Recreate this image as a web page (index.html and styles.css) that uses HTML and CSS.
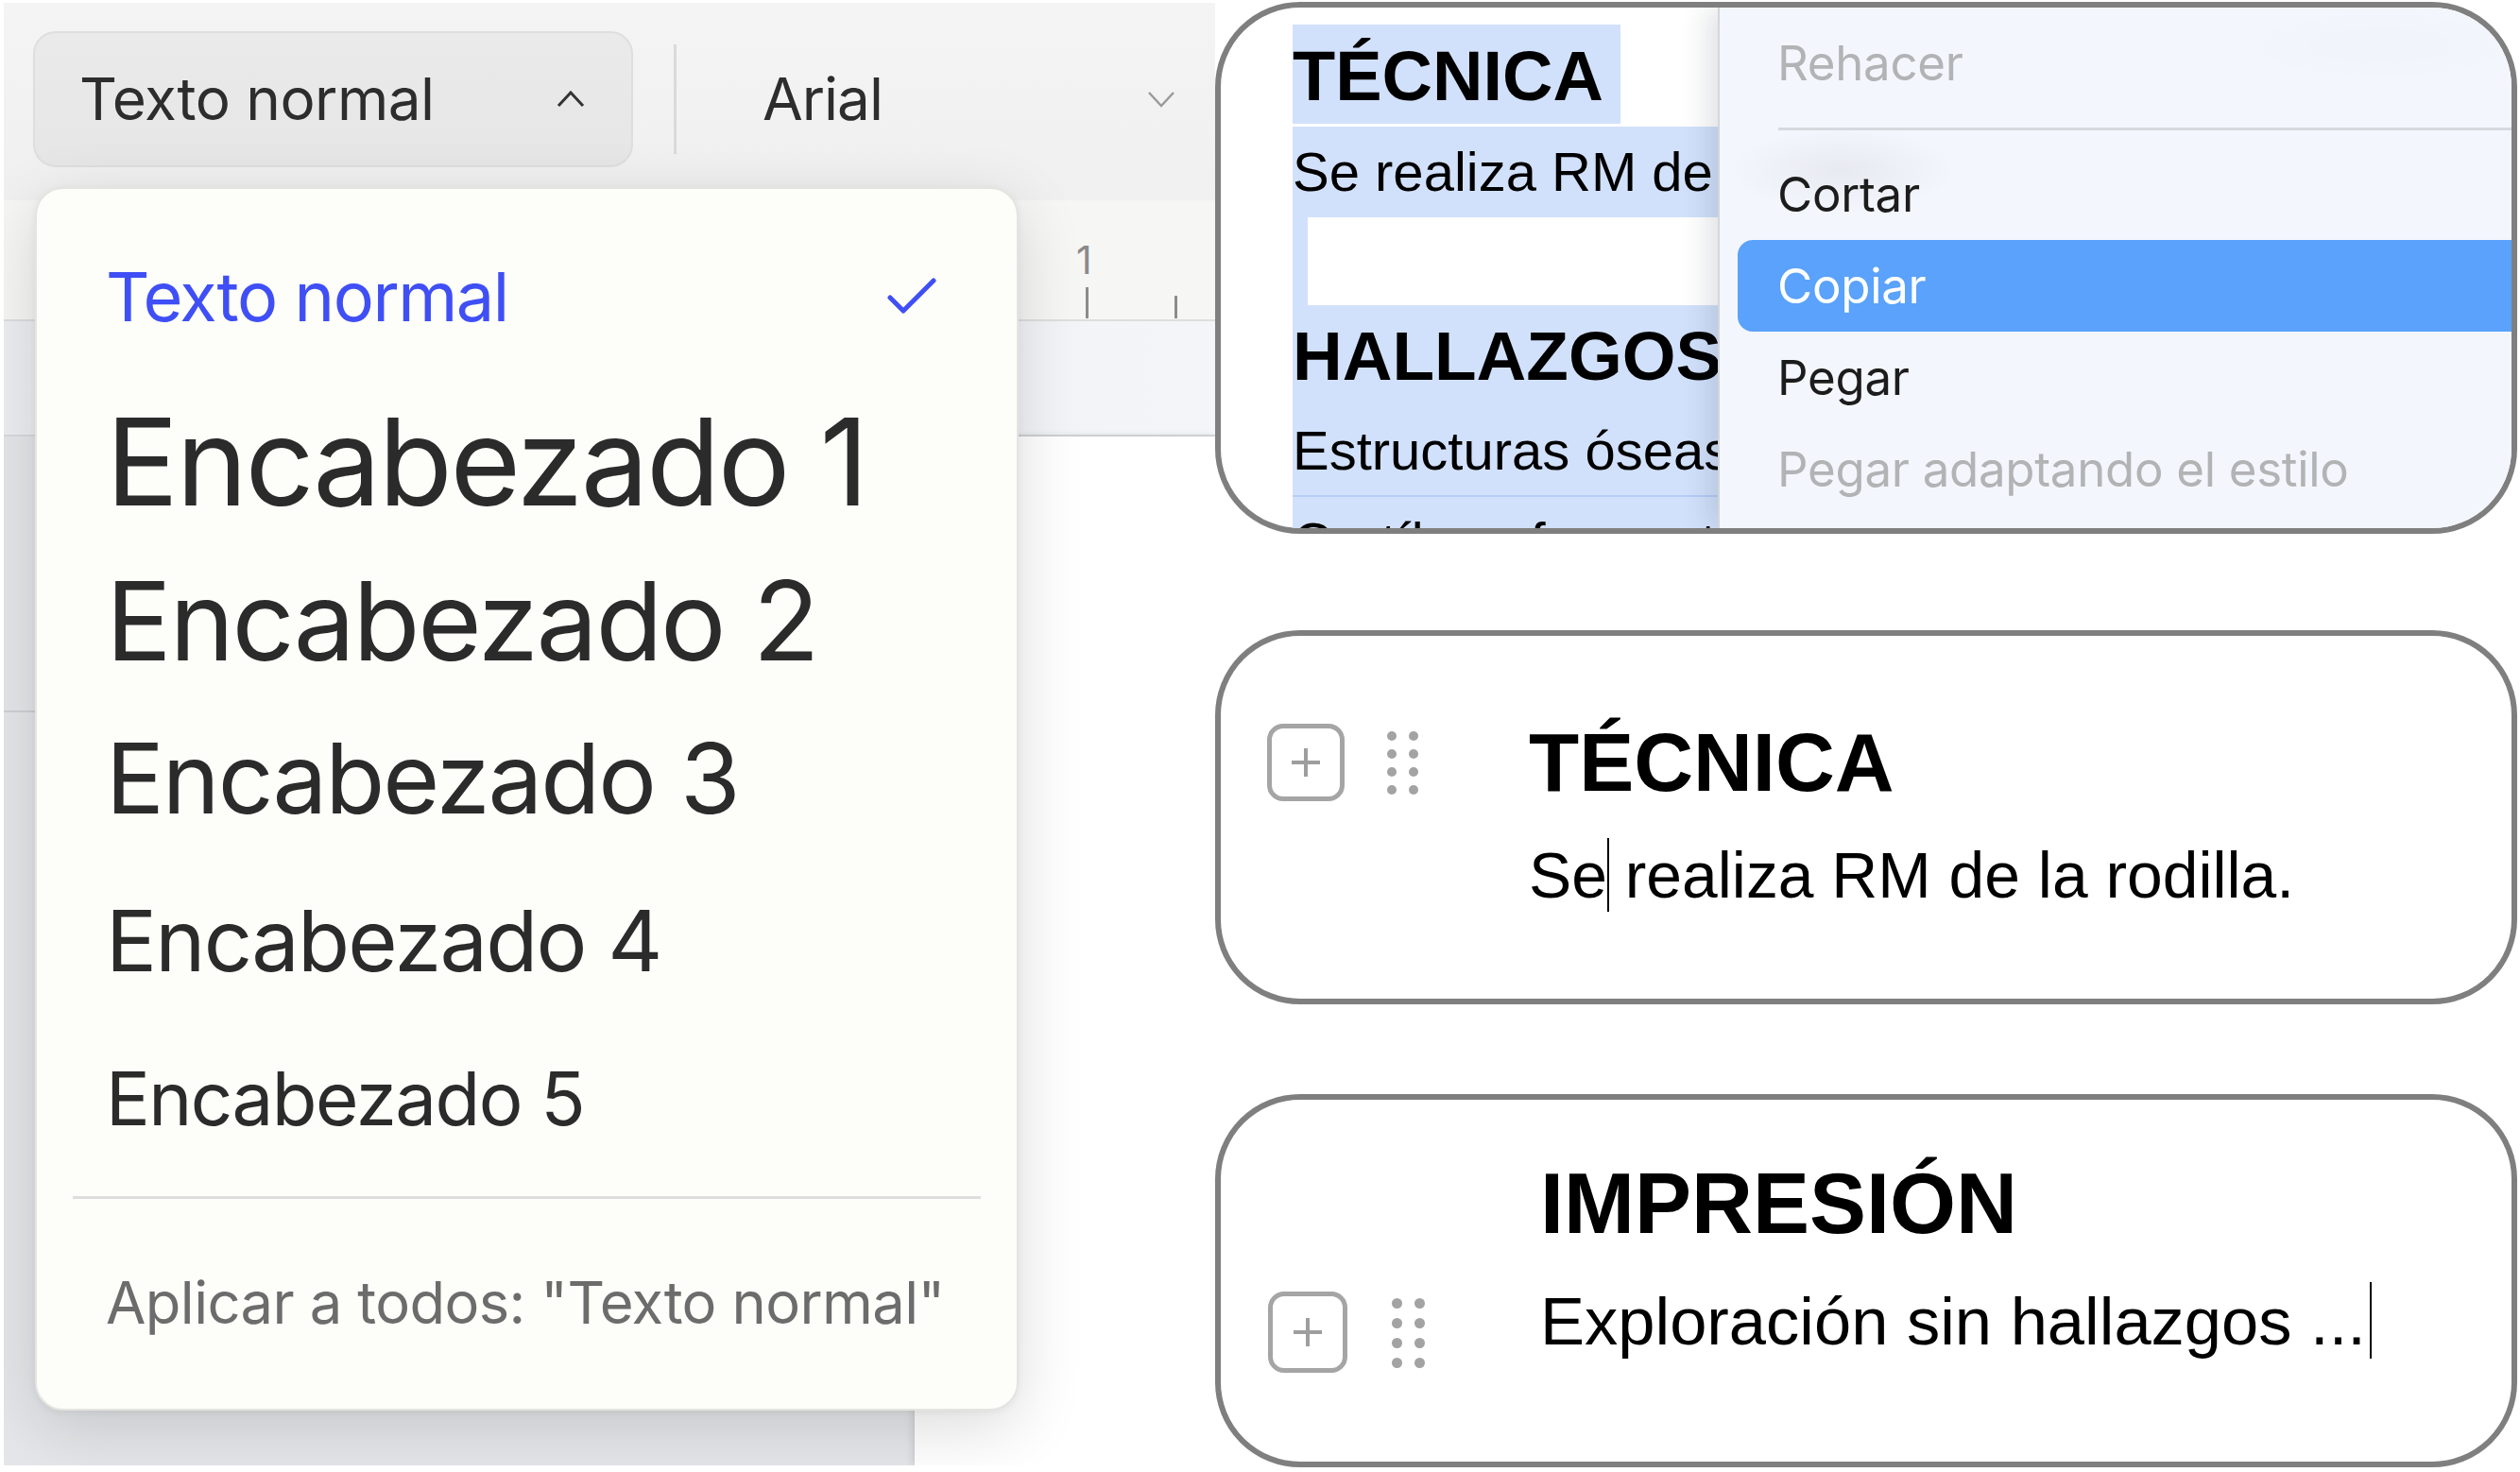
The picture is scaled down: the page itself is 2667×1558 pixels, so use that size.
FILE: index.html
```html
<!DOCTYPE html>
<html lang="es">
<head>
<meta charset="utf-8">
<title>Estilos de párrafo y bloques</title>
<link rel="stylesheet" href="styles.css">
</head>
<body>
<div class="stage">

  <section class="editor">
    <div class="toolbar">
      <button class="style-select">
        <span>Texto normal</span>
        <svg class="caret-up" width="30" height="18" viewBox="0 0 30 18"><polyline points="2,16 15,2 28,16" fill="none" stroke="#333" stroke-width="3"/></svg>
      </button>
      <span class="tool-divider"></span>
      <div class="font-select">
        <span>Arial</span>
        <svg class="chev-down" width="30" height="18" viewBox="0 0 30 18"><polyline points="2,2 15,16 28,2" fill="none" stroke="#9a9a9a" stroke-width="2.5"/></svg>
      </div>
    </div>

    <div class="ruler">
      <div class="ruler-mark">
        <span class="ruler-num">1</span>
        <i class="tick tall"></i>
      </div>
      <i class="tick short"></i>
    </div>

    <div class="subbar"></div>

    <div class="canvas">
      <div class="gutter"><i class="gutter-line"></i></div>
      <div class="page"></div>
    </div>

    <div class="style-menu">
      <div class="style-item current">
        <span>Texto normal</span>
        <svg class="check" width="52" height="40" viewBox="0 0 52 40"><polyline points="3,21 17,35 49,3" fill="none" stroke="#3f4ff5" stroke-width="5" stroke-linecap="round" stroke-linejoin="round"/></svg>
      </div>
      <div class="style-item h1">Encabezado 1</div>
      <div class="style-item h2">Encabezado 2</div>
      <div class="style-item h3">Encabezado 3</div>
      <div class="style-item h4">Encabezado 4</div>
      <div class="style-item h5">Encabezado 5</div>
      <hr class="style-sep">
      <div class="style-item apply">Aplicar a todos: "Texto normal"</div>
    </div>
  </section>

  <div class="shots">
    <div class="shot shot-menu">
      <div class="doc">
        <div class="sel-title">TÉCNICA</div>
        <div class="sel-line">Se realiza RM de la rodilla.</div>
        <div class="sel-empty"><div class="sel-empty-fill"></div></div>
        <div class="sel-head">HALLAZGOS</div>
        <div class="sel-line short">Estructuras óseas de morfología normal.</div>
        <div class="sel-rule"></div>
        <div class="sel-line">Cartílago femorotibial conservado.</div>
      </div>
      <div class="ctx-menu">
        <div class="mi disabled">Rehacer</div>
        <div class="mi-sep"></div>
        <div class="mi">Cortar</div>
        <div class="mi active">Copiar</div>
        <div class="mi">Pegar</div>
        <div class="mi disabled">Pegar adaptando el estilo</div>
      </div>
    </div>

    <div class="shot shot-block">
      <div class="controls">
        <span class="add-btn"><svg width="32" height="32" viewBox="0 0 32 32"><path d="M16 1v30M1 16h30" stroke="#9e9e9e" stroke-width="4"/></svg></span>
        <span class="grip"><i></i><i></i><i></i><i></i><i></i><i></i><i></i><i></i></span>
      </div>
      <div class="block-text">
        <h2 class="block-head">TÉCNICA</h2>
        <p class="block-body">Se<span class="caret"></span> realiza RM de la rodilla.</p>
      </div>
    </div>

    <div class="shot shot-block impr">
      <div class="controls">
        <span class="add-btn"><svg width="32" height="32" viewBox="0 0 32 32"><path d="M16 1v30M1 16h30" stroke="#9e9e9e" stroke-width="4"/></svg></span>
        <span class="grip"><i></i><i></i><i></i><i></i><i></i><i></i><i></i><i></i></span>
      </div>
      <div class="block-text">
        <h2 class="block-head">IMPRESIÓN</h2>
        <p class="block-body">Exploración sin hallazgos ...<span class="caret"></span></p>
      </div>
    </div>
  </div>

</div>
</body>
</html>
```

FILE: styles.css
```css
* { box-sizing: border-box; }

html, body {
  margin: 0;
  padding: 0;
  background: #ffffff;
}

body {
  width: 2667px;
  height: 1558px;
  overflow: hidden;
  font-family: Inter, "Noto Sans", sans-serif;
}

.stage {
  display: flex;
  align-items: flex-start;
}

/* ---------- editor with the paragraph-style menu ---------- */

.editor {
  position: relative;
  margin: 3px 0 0 4px;
  width: 1282px;
  height: 1548px;
  overflow: hidden;
  display: flex;
  flex-direction: column;
}

.toolbar {
  height: 209px;
  flex: none;
  display: flex;
  align-items: flex-start;
  padding: 30px 0 0 31px;
  background: linear-gradient(#f4f4f4, #f0f0f0);
}

.style-select {
  width: 635px;
  height: 144px;
  display: flex;
  align-items: center;
  padding: 0 49px 0 47px;
  border: 2px solid #dedede;
  border-radius: 24px;
  background: linear-gradient(#eaeaea, #e6e6e6);
  font: 400 62px/1.2 Inter, sans-serif;
  color: #2d2d2d;
  letter-spacing: -0.5px;
}

.caret-up { margin-left: auto; }

.tool-divider {
  width: 3px;
  height: 116px;
  margin: 14px 0 0 43px;
  background: #dadada;
}

.font-select {
  width: 437px;
  height: 144px;
  margin-left: 91px;
  display: flex;
  align-items: center;
  font: 400 62px/1.2 Inter, sans-serif;
  color: #2d2d2d;
  letter-spacing: -1px;
}

.chev-down { margin-left: auto; }

.ruler {
  height: 128px;
  flex: none;
  display: flex;
  align-items: flex-end;
  padding: 0 0 0 1135px;
  background: #f6f6f4;
  border-bottom: 2px solid #dedede;
}

.ruler-mark {
  display: flex;
  flex-direction: column;
  align-items: flex-end;
}

.ruler-num {
  font: 400 41px/1 Inter, sans-serif;
  color: #8a8a8a;
  margin-bottom: 8px;
}

.tick {
  display: block;
  width: 3px;
  background: #8c8c8c;
}

.tick.tall { height: 33px; margin: 0 4px 1px 0; }
.tick.short { height: 24px; margin: 0 0 1px 87px; }

.subbar {
  height: 122px;
  flex: none;
  background: linear-gradient(90deg, #eceef1, #f3f5f8);
  border-bottom: 2px solid #d9dadc;
}

.canvas {
  flex: 1;
  display: flex;
  background: #e5e6e9;
}

.gutter {
  width: 964px;
  padding-top: 290px;
}

.gutter-line {
  display: block;
  width: 33px;
  height: 2px;
  background: #cfd0d3;
}

.page {
  flex: 1;
  background: #ffffff;
  box-shadow: -2px 0 8px rgba(0, 0, 0, 0.12);
}

/* paragraph style dropdown */
.style-menu {
  position: absolute;
  left: 33px;
  top: 195px;
  width: 1041px;
  height: 1295px;
  padding: 78px 85px 0 73px;
  background: #fdfdf9;
  border: 2px solid #e4e4e1;
  border-radius: 30px;
  box-shadow: 0 18px 70px rgba(0, 0, 0, 0.14), 0 2px 8px rgba(0, 0, 0, 0.05);
  color: #2b2b2b;
}

.style-item {
  line-height: 1;
  white-space: nowrap;
  letter-spacing: -0.02em;
}

.style-item.current {
  display: flex;
  align-items: center;
  justify-content: space-between;
  font-size: 72px;
  color: #3f4ff5;
}

.style-item.h1 { font-size: 128px; margin-top: 75px; }
.style-item.h2 { font-size: 116px; margin-top: 46px; }
.style-item.h3 { font-size: 103px; margin-top: 57px; }
.style-item.h4 { font-size: 90px; margin-top: 76px; }
.style-item.h5 { font-size: 78px; margin-top: 83px; }

.style-sep {
  height: 3px;
  margin: 64px -47px 0 -35px;
  border: 0;
  background: #dedede;
}

.style-item.apply {
  font-size: 61.5px;
  margin-top: 79px;
  color: #6c6c6c;
  letter-spacing: -0.01em;
}

/* ---------- framed snippets on the right ---------- */

.shots {
  width: 1378px;
  display: flex;
  flex-direction: column;
}

.shot {
  border: 6px solid #7f7f7f;
  border-radius: 90px;
  overflow: hidden;
  background: #ffffff;
  font-family: "Liberation Sans", Arial, sans-serif;
  color: #000;
}

.shot-menu {
  margin-top: 2px;
  height: 563px;
  display: flex;
}

/* selected document content */
.doc {
  width: 526px;
  flex: none;
  padding: 18px 0 0 76px;
  overflow: hidden;
  white-space: nowrap;
}

.sel-title {
  width: 347px;
  height: 105px;
  padding-top: 4px;
  margin-bottom: 3px;
  background: #d2e1fb;
  font-weight: 700;
  font-size: 74px;
  line-height: 101px;
}

.sel-line {
  height: 96px;
  background: #d2e1fb;
  font-size: 58px;
  line-height: 96px;
}

.sel-line.short { height: 94px; line-height: 94px; }

.sel-empty {
  height: 93px;
  padding-left: 16px;
  background: #d2e1fb;
}

.sel-empty-fill {
  height: 100%;
  background: #ffffff;
}

.sel-head {
  height: 107px;
  background: #d2e1fb;
  font-weight: 700;
  font-size: 73px;
  line-height: 107px;
}

.sel-rule {
  height: 2px;
  background: #b7cdf6;
}

/* context menu */
.ctx-menu {
  position: relative;
  flex: 1;
  padding-top: 10px;
  border-left: 2px solid #d3d6db;
  background:
    radial-gradient(ellipse 120px 45px at 130px 172px, rgba(0, 0, 0, 0.05), transparent),
    radial-gradient(ellipse 160px 40px at 700px 40px, rgba(0, 0, 0, 0.01), transparent),
    #f3f6fc;
  box-shadow: -10px 0 28px rgba(30, 40, 60, 0.14);
  font-family: Inter, "Noto Sans", sans-serif;
}

.mi {
  height: 97px;
  padding-left: 61px;
  font-size: 51px;
  line-height: 97px;
  color: #1c1c1c;
  letter-spacing: -0.3px;
  white-space: nowrap;
}

.mi.disabled { color: #b2b3b5; }

.mi.active {
  margin-left: 19px;
  padding-left: 42px;
  border-radius: 16px 0 0 16px;
  background: #5aa2fb;
  color: #ffffff;
}

.mi-sep {
  height: 3px;
  margin: 20px 0 19px 62px;
  background: #d6d9de;
}

/* block editor snippets */
.shot-block {
  display: flex;
  align-items: flex-start;
  margin-top: 102px;
  height: 396px;
}

.shot-block.impr {
  margin-top: 95px;
  height: 395px;
}

.controls {
  display: flex;
  align-items: flex-start;
  gap: 45px;
  margin: 93px 0 0 49px;
}

.impr .controls {
  gap: 47px;
  margin: 203px 0 0 50px;
}

.add-btn {
  width: 82px;
  height: 82px;
  display: flex;
  align-items: center;
  justify-content: center;
  border: 5px solid #a5a5a5;
  border-radius: 17px;
}

.impr .add-btn {
  width: 84px;
  height: 86px;
}

.grip {
  display: grid;
  grid-template-columns: 10px 10px;
  column-gap: 13px;
  row-gap: 9px;
  margin-top: 8px;
}

.grip i {
  width: 10px;
  height: 10px;
  border-radius: 50%;
  background: #a3a3a3;
}

.impr .grip {
  grid-template-columns: 11px 11px;
  row-gap: 10px;
  margin-top: 7px;
}

.impr .grip i { width: 11px; height: 11px; }

.block-text {
  margin-left: 117px;
  padding-top: 84px;
  white-space: nowrap;
}

.impr .block-text {
  margin-left: 122px;
  padding-top: 60px;
}

.block-head {
  margin: 0;
  font-weight: 700;
  font-size: 87px;
  line-height: 100px;
}

.impr .block-head { font-size: 90px; }

.block-body {
  margin: 25px 0 0;
  font-size: 67.8px;
  line-height: 90px;
}

.impr .block-body {
  margin-top: 30px;
  font-size: 70.5px;
}

.caret {
  display: inline-block;
  width: 2px;
  height: 78px;
  margin-right: -2px;
  vertical-align: -15px;
  background: #000;
}

.impr .caret {
  height: 81px;
  margin-left: 4px;
}
```
